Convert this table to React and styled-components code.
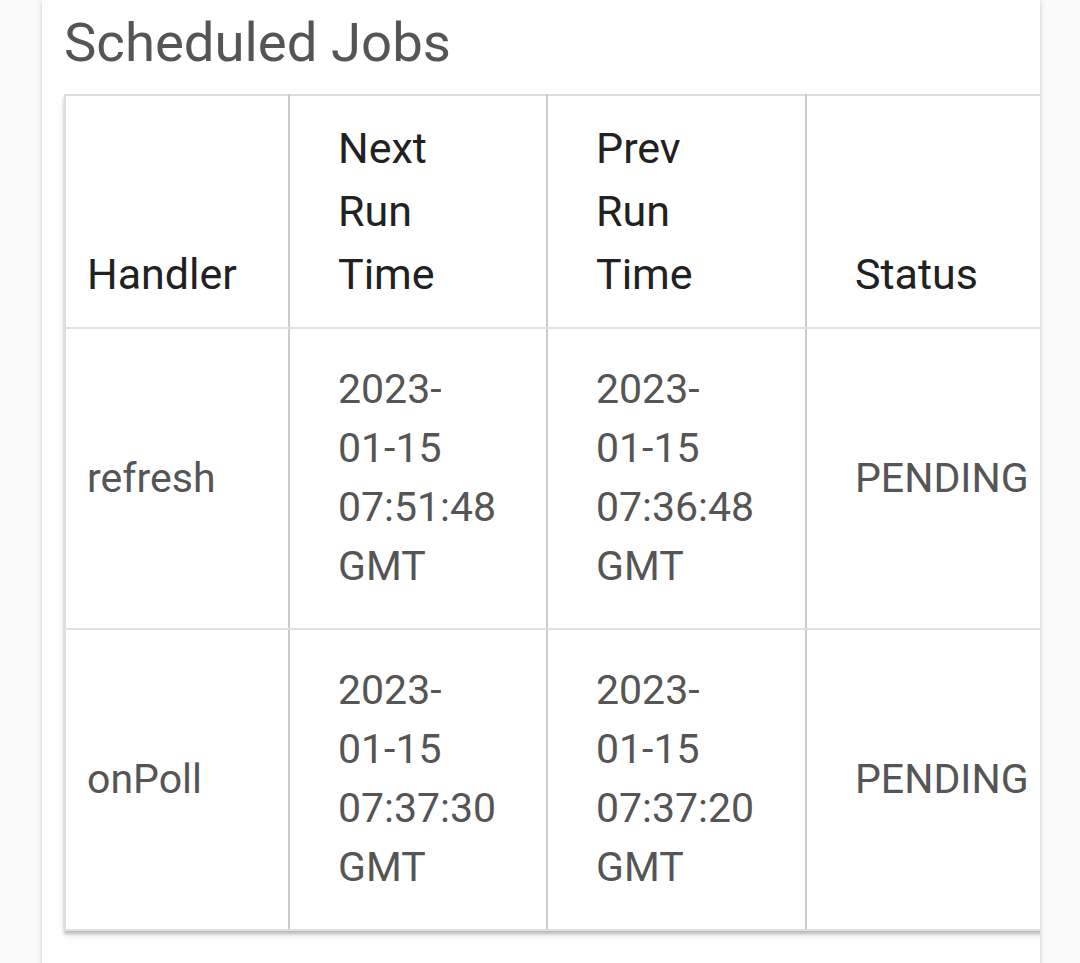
import React from "react";
import styled, { createGlobalStyle } from "styled-components";

const GlobalStyle = createGlobalStyle`
  html, body {
    margin: 0;
    padding: 0;
    background: #fafafa;
    font-family: Roboto, "Noto Sans", sans-serif;
  }
`;

const Page = styled.div`
  padding-left: 42px;
  width: 998px;
`;

// card that holds the title and the clipped table
const Card = styled.section`
  background: #fff;
  min-height: 963px;
  padding: 10px 0 0 22px;
  overflow: hidden;
  box-shadow: 0 0 6px rgba(0, 0, 0, 0.12), 0 2px 4px rgba(0, 0, 0, 0.08);
`;

const Title = styled.h2`
  margin: 0 0 20px;
  font-size: 54.5px;
  line-height: 64px;
  font-weight: 400;
  color: #555;
`;

const Table = styled.table`
  border-collapse: collapse;
  table-layout: fixed;
  width: 1012px;
  background: #fff;
  border-top: 2px solid #dedede;
  border-left: 2px solid #dedede;
  box-shadow: 0 3px 3px rgba(0, 0, 0, 0.22), 0 5px 8px rgba(0, 0, 0, 0.08);
`;

const Head = styled.th`
  font-size: 43px;
  line-height: 63px;
  font-weight: 400;
  color: #212121;
  text-align: left;
  vertical-align: bottom;
  padding: 21px 49px 21px ${(p) => (p.first ? "21px" : "48px")};
  border-right: 2px solid #cbcbcb;
  border-bottom: 2px solid #e0e0e0;
`;

const Cell = styled.td`
  font-size: 41px;
  line-height: 59px;
  color: #555;
  text-align: left;
  vertical-align: middle;
  padding: 31px 49px 32px ${(p) => (p.first ? "21px" : "48px")};
  border-right: 2px solid #cbcbcb;
  border-bottom: 2px solid #e0e0e0;
`;

const columns = ["Handler", "Next Run Time", "Prev Run Time", "Status"];
const widths = [224, 258, 259, 271];

const jobs = [
  {
    handler: "refresh",
    next: "2023-01-15 07:51:48 GMT",
    prev: "2023-01-15 07:36:48 GMT",
    status: "PENDING",
  },
  {
    handler: "onPoll",
    next: "2023-01-15 07:37:30 GMT",
    prev: "2023-01-15 07:37:20 GMT",
    status: "PENDING",
  },
];

function App() {
  return (
    <Page>
      <GlobalStyle />
      <Card>
        <Title>Scheduled Jobs</Title>
        <Table>
          <colgroup>
            {widths.map((w, i) => (
              <col key={i} style={{ width: w }} />
            ))}
          </colgroup>
          <thead>
            <tr>
              {columns.map((c, i) => (
                <Head key={c} first={i === 0}>
                  {c}
                </Head>
              ))}
            </tr>
          </thead>
          <tbody>
            {jobs.map((job) => (
              <tr key={job.handler}>
                <Cell first>{job.handler}</Cell>
                <Cell>{job.next}</Cell>
                <Cell>{job.prev}</Cell>
                <Cell>{job.status}</Cell>
              </tr>
            ))}
          </tbody>
        </Table>
      </Card>
    </Page>
  );
}

export default App;
